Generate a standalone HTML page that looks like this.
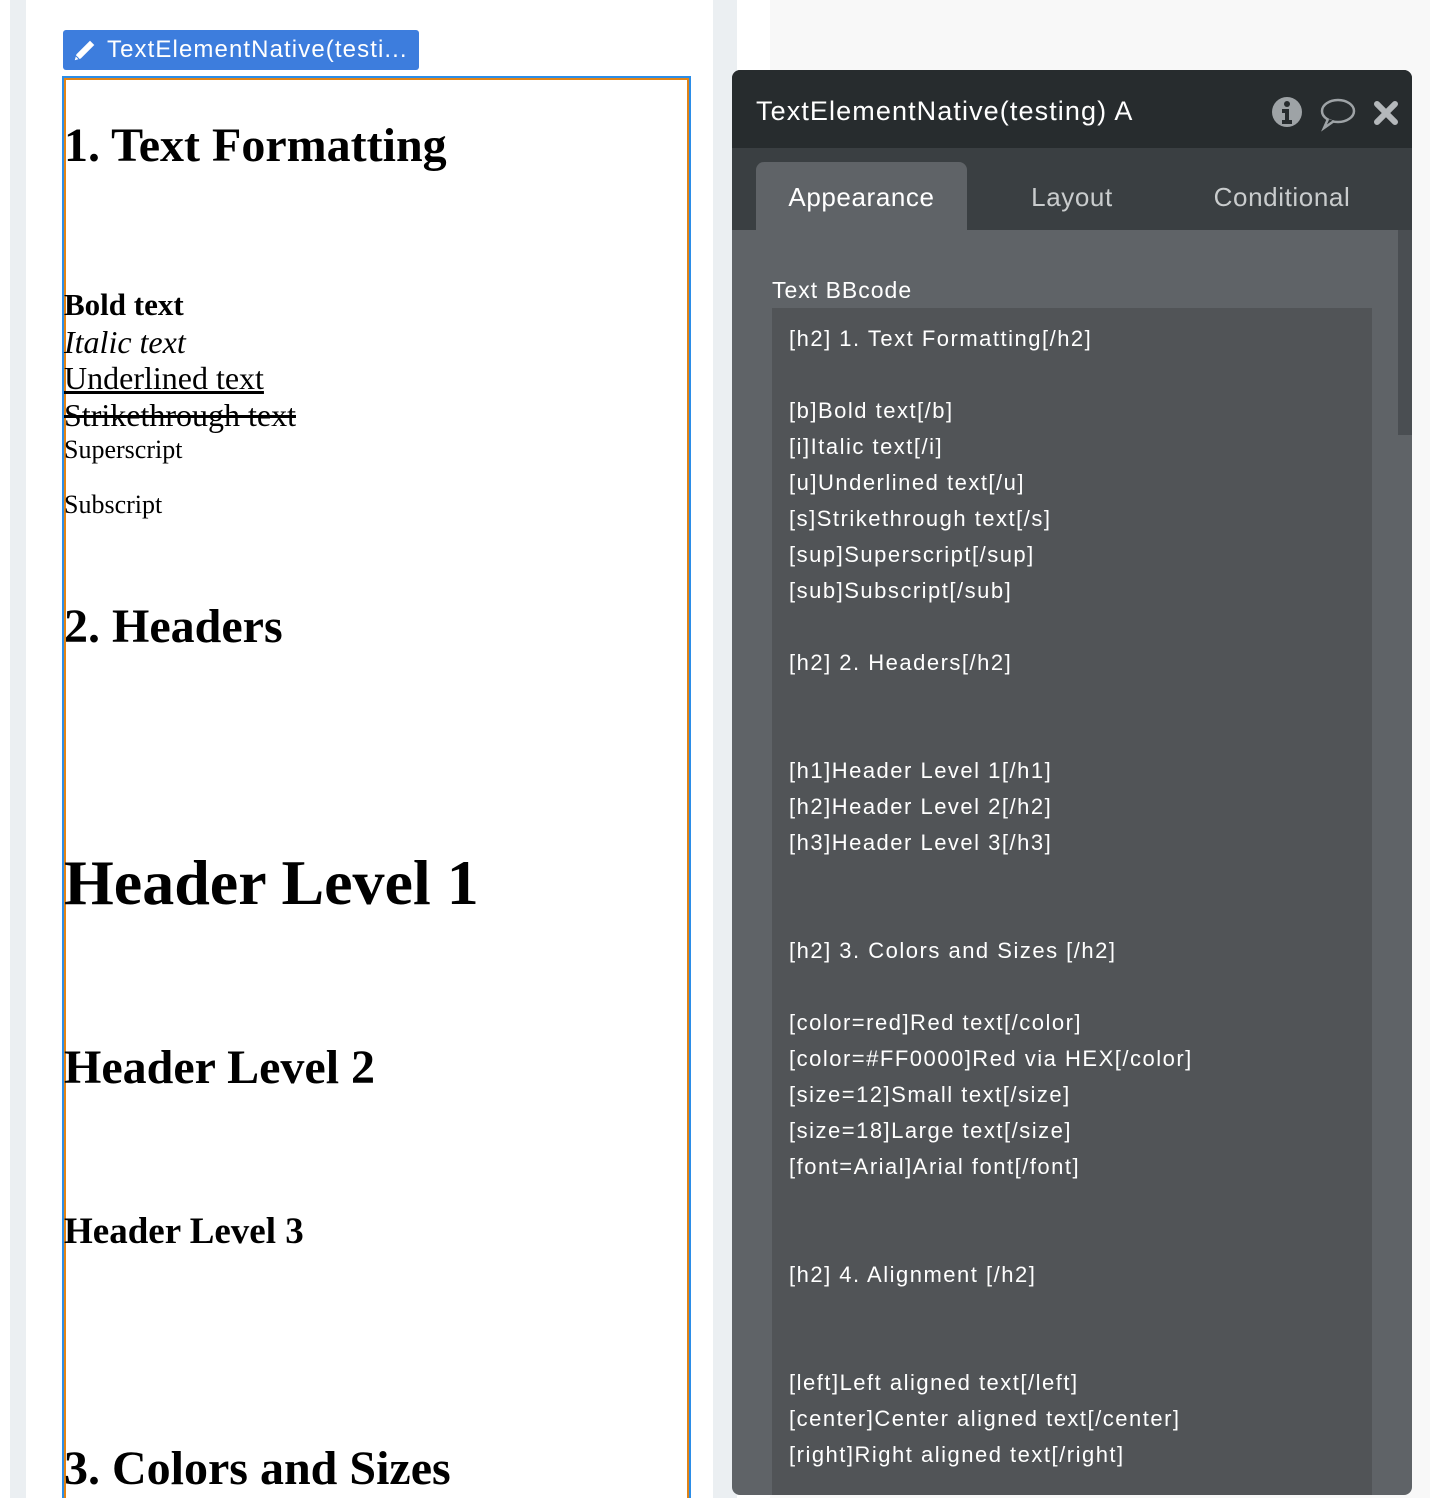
<!DOCTYPE html>
<html><head><meta charset="utf-8"><style>
*{margin:0;padding:0;box-sizing:border-box}
html,body{width:1430px;height:1498px;overflow:hidden}
body{position:relative;background:#fff;font-family:"Liberation Sans",sans-serif}
.a{position:absolute;white-space:nowrap}
.s{font-family:"Liberation Serif",serif;line-height:1;color:#000}
</style></head><body>
<div class="a" style="left:10px;top:0;width:16px;height:1498px;background:#ebeff2"></div>
<div class="a" style="left:713px;top:0;width:24px;height:1498px;background:#ebeff2"></div>
<div class="a" style="left:770px;top:0;width:660px;height:1498px;background:#f8f8f8"></div>

<div class="a" style="left:63px;top:30px;width:356px;height:40px;background:#3d7ddd;border-radius:3px;color:#fff;font-size:24px;line-height:40px;padding-left:44px;letter-spacing:1.1px;overflow:hidden">TextElementNative(testi...</div>
<svg class="a" style="left:70px;top:35px" width="30" height="30" viewBox="0 0 30 30"><path d="M4 26 L6 19 L20 5 L25 10 L11 24 Z M6 21 L9 24" fill="#fff" stroke="#3d7ddd" stroke-width="1"/></svg>

<div class="a" style="left:62px;top:76px;width:629px;height:1422px;border:2px solid #2b8de8;border-bottom:none"></div>
<div class="a" style="left:64px;top:78px;width:625px;height:1420px;border:2px solid #e08418;border-bottom:none"></div>

<div class="a s" style="left:64px;top:122px;font-size:48px;font-weight:bold">1. Text Formatting</div>
<div class="a s" style="left:64px;top:289px;font-size:31px;font-weight:bold">Bold text</div>
<div class="a s" style="left:64px;top:326px;font-size:32px;font-style:italic">Italic text</div>
<div class="a s" style="left:64px;top:362px;font-size:32px;text-decoration:underline">Underlined text</div>
<div class="a s" style="left:64px;top:399px;font-size:32px;text-decoration:line-through">Strikethrough text</div>
<div class="a s" style="left:64px;top:437px;font-size:26px">Superscript</div>
<div class="a s" style="left:64px;top:492px;font-size:26px">Subscript</div>
<div class="a s" style="left:64px;top:603px;font-size:48px;font-weight:bold">2. Headers</div>
<div class="a s" style="left:64px;top:851px;font-size:64px;font-weight:bold">Header Level 1</div>
<div class="a s" style="left:64px;top:1044px;font-size:48px;font-weight:bold">Header Level 2</div>
<div class="a s" style="left:64px;top:1213px;font-size:37px;font-weight:bold">Header Level 3</div>
<div class="a s" style="left:64px;top:1445px;font-size:48px;font-weight:bold">3. Colors and Sizes</div>

<div class="a" style="left:732px;top:70px;width:680px;height:1425px;background:#5f6367;border-radius:8px;overflow:hidden">
 <div class="a" style="left:0;top:0;width:680px;height:78px;background:#272c2e"></div>
 <div class="a" style="left:24px;top:24px;font-size:27px;color:#fff;line-height:34px;letter-spacing:1.1px">TextElementNative(testing) A</div>
 <svg class="a" style="left:538px;top:26px" width="34" height="34" viewBox="0 0 34 34"><circle cx="17" cy="16" r="15" fill="#9ea3a6"/><circle cx="17" cy="8" r="3" fill="#272c2e"/><path d="M12 13h7v11h3v4H12v-4h3v-7h-3z" fill="#272c2e"/></svg>
 <svg class="a" style="left:586px;top:26px" width="40" height="36" viewBox="0 0 40 36"><ellipse cx="20" cy="15" rx="16" ry="11" fill="none" stroke="#9ea3a6" stroke-width="2.5"/><path d="M10 23 L6 32 L16 25" fill="#272c2e" stroke="#9ea3a6" stroke-width="2.5"/></svg>
 <svg class="a" style="left:640px;top:29px" width="28" height="28" viewBox="0 0 28 28"><path d="M5 5L23 23M23 5L5 23" stroke="#b4b8bb" stroke-width="6" stroke-linecap="round"/></svg>
 <div class="a" style="left:0;top:78px;width:680px;height:82px;background:#3a3f42"></div>
 <div class="a" style="left:24px;top:92px;width:211px;height:68px;background:#5f6367;border-radius:8px 8px 0 0"></div>
 <div class="a" style="left:24px;top:110px;width:211px;text-align:center;font-size:26px;color:#fff;line-height:34px;letter-spacing:0.6px">Appearance</div>
 <div class="a" style="left:240px;top:110px;width:200px;text-align:center;font-size:26px;color:#c9cccd;line-height:34px;letter-spacing:0.6px">Layout</div>
 <div class="a" style="left:450px;top:110px;width:200px;text-align:center;font-size:26px;color:#c9cccd;line-height:34px;letter-spacing:0.6px">Conditional</div>
 <div class="a" style="left:666px;top:160px;width:14px;height:205px;background:#4a4e52"></div>
 <div class="a" style="left:40px;top:205px;font-size:23px;color:#fff;line-height:30px;letter-spacing:1px">Text BBcode</div>
 <div class="a" style="left:40px;top:238px;width:600px;height:1200px;background:#515457"></div>
 <div class="a" style="left:57px;top:251px;font-size:22px;color:#fff;line-height:36px;white-space:pre;letter-spacing:1.5px">[h2] 1. Text Formatting[/h2]

[b]Bold text[/b]
[i]Italic text[/i]
[u]Underlined text[/u]
[s]Strikethrough text[/s]
[sup]Superscript[/sup]
[sub]Subscript[/sub]

[h2] 2. Headers[/h2]


[h1]Header Level 1[/h1]
[h2]Header Level 2[/h2]
[h3]Header Level 3[/h3]


[h2] 3. Colors and Sizes [/h2]

[color=red]Red text[/color]
[color=#FF0000]Red via HEX[/color]
[size=12]Small text[/size]
[size=18]Large text[/size]
[font=Arial]Arial font[/font]


[h2] 4. Alignment [/h2]


[left]Left aligned text[/left]
[center]Center aligned text[/center]
[right]Right aligned text[/right]</div>
</div>
</body></html>
